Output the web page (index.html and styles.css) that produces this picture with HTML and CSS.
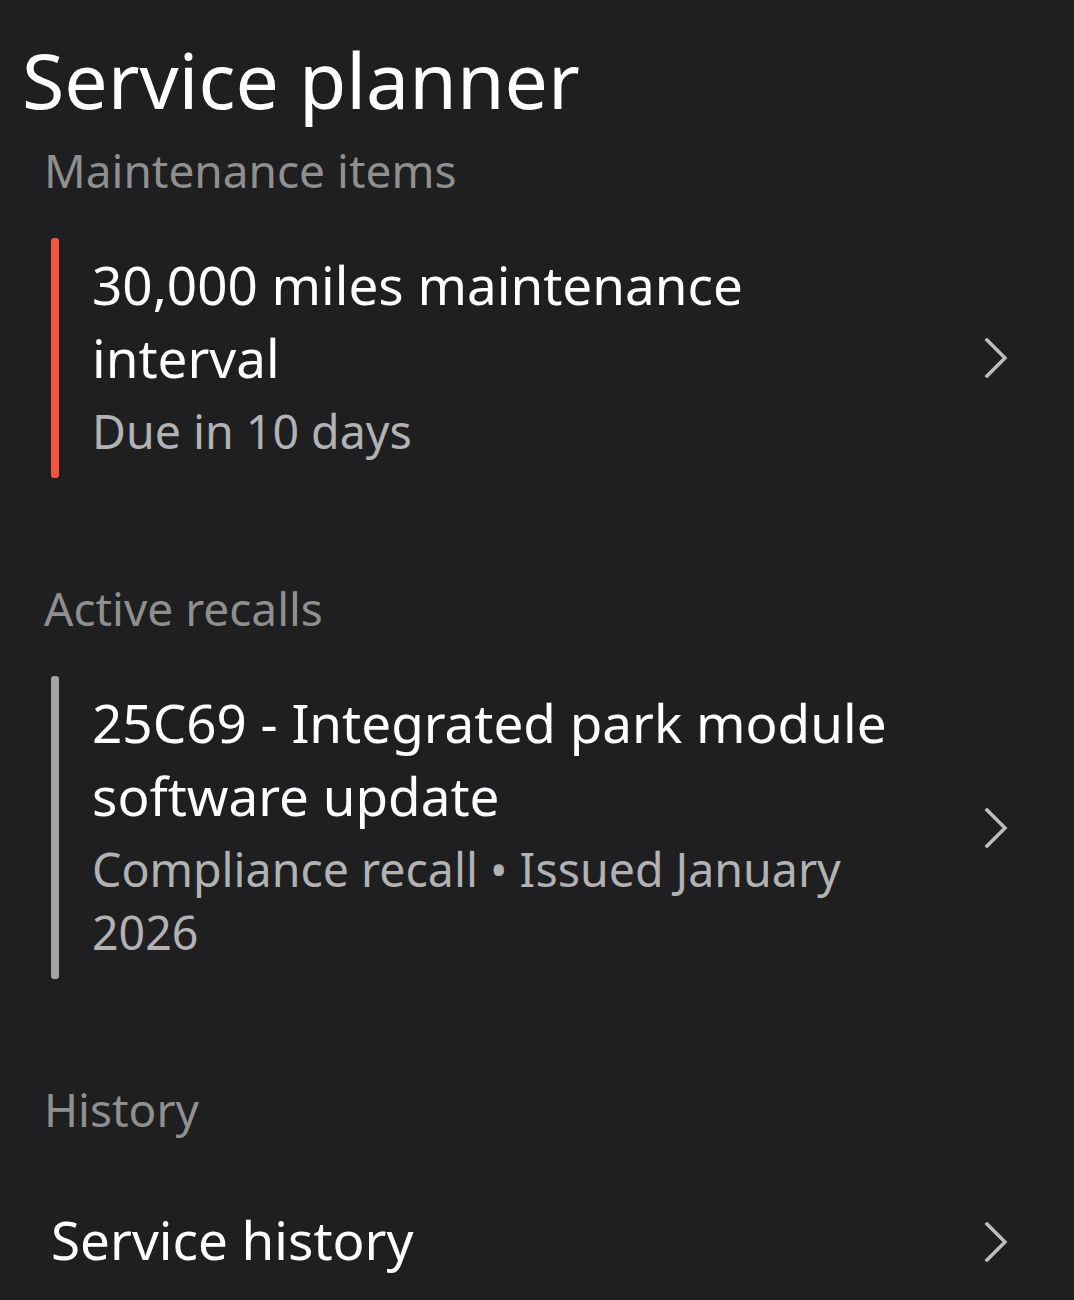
FILE: index.html
```html
<!DOCTYPE html>
<html lang="en">
<head>
    <meta charset="UTF-8">
    <meta name="viewport" content="width=device-width, initial-scale=1.0">
    <title>Service planner</title>
    <link rel="stylesheet" href="styles.css">
</head>
<body>
    <div class="page">
        <h1 class="page-title">Service planner</h1>

        <section class="group">
            <h2 class="group-label">Maintenance items</h2>
            <a class="row" href="#">
                <span class="bar bar-due"></span>
                <div class="row-text">
                    <div class="row-title">30,000 miles maintenance interval</div>
                    <div class="row-sub">Due in 10 days</div>
                </div>
                <svg class="chevron" viewBox="0 0 24 40" aria-hidden="true">
                    <polyline points="3,2 21,20 3,38" />
                </svg>
            </a>
        </section>

        <section class="group">
            <h2 class="group-label">Active recalls</h2>
            <a class="row" href="#">
                <span class="bar bar-recall"></span>
                <div class="row-text">
                    <div class="row-title">25C69 - Integrated park module software update</div>
                    <div class="row-sub">Compliance recall • Issued January 2026</div>
                </div>
                <svg class="chevron" viewBox="0 0 24 40" aria-hidden="true">
                    <polyline points="3,2 21,20 3,38" />
                </svg>
            </a>
        </section>

        <section class="group">
            <h2 class="group-label">History</h2>
            <a class="row row-plain" href="#">
                <div class="row-text">
                    <div class="row-title">Service history</div>
                </div>
                <svg class="chevron" viewBox="0 0 24 40" aria-hidden="true">
                    <polyline points="3,2 21,20 3,38" />
                </svg>
            </a>
        </section>
    </div>
</body>
</html>
```
FILE: styles.css
```css
/* Base */
* {
    box-sizing: border-box;
    margin: 0;
    padding: 0;
}

body {
    font-family: 'Noto Sans', 'Open Sans', sans-serif;
    background-color: #1f1f21;
    color: #fff;
    min-height: 100vh;
}

.page {
    padding: 34px 66px 0 22px;
}

.page-title {
    font-size: 77px;
    font-weight: 400;
    line-height: 91px;
    margin-bottom: 15px;
}

/* Sections */
.group {
    margin-bottom: 100px;
}

.group:last-child {
    margin-bottom: 0;
}

.group-label {
    font-size: 46px;
    font-weight: 400;
    line-height: 60px;
    color: #8f8f90;
    padding-left: 22px;
    margin-bottom: 38px;
}

/* List rows */
.row {
    display: flex;
    align-items: center;
    margin-left: 29px;
    color: inherit;
    text-decoration: none;
}

.bar {
    align-self: stretch;
    width: 8px;
    border-radius: 3px;
    flex-shrink: 0;
    margin-right: 33px;
}

.bar-due {
    background-color: #f3553c;
}

.bar-recall {
    background-color: #a4a4a6;
}

.row-text {
    flex: 1;
    padding: 10px 0 15px;
}

.row-title {
    font-size: 53px;
    line-height: 73px;
    color: #fff;
}

.row-sub {
    font-size: 46.5px;
    line-height: 63px;
    color: #b2b2b4;
    margin-top: 6px;
}

.row-plain {
    padding-top: 16px;
}

.chevron {
    width: 24px;
    height: 40px;
    flex-shrink: 0;
    margin-left: 85px;
    fill: none;
    stroke: #bdbdbf;
    stroke-width: 3.5;
    stroke-linecap: square;
}
```
